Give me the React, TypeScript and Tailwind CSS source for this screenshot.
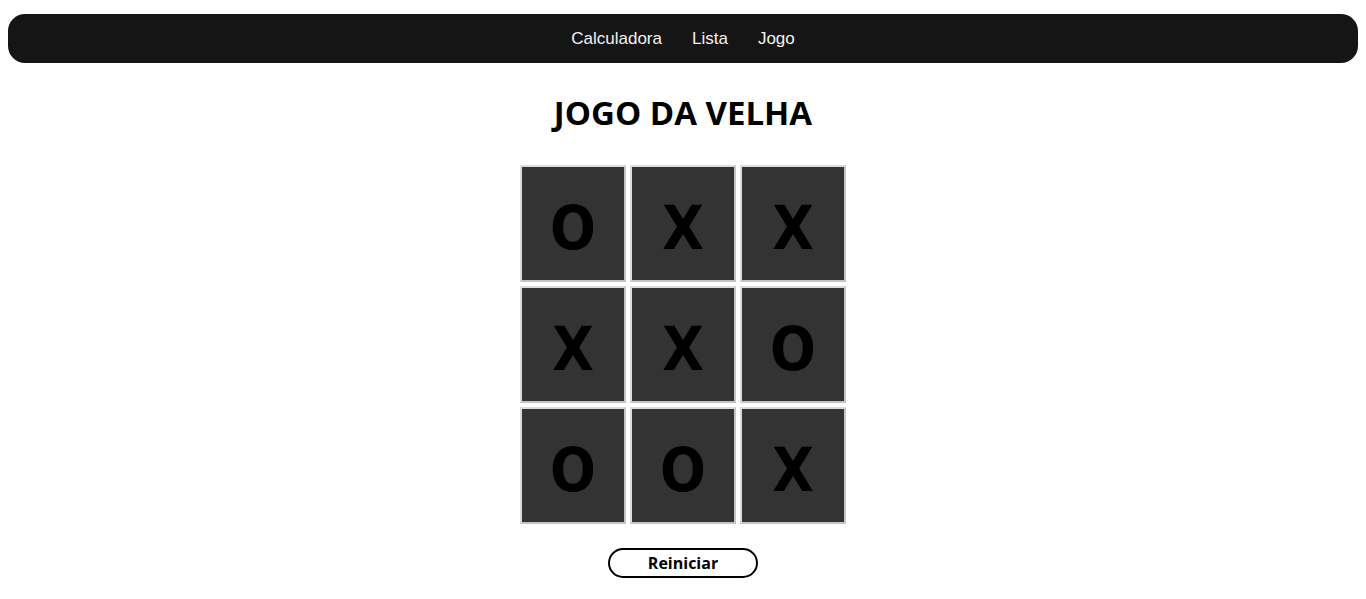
const board = ["O", "X", "X", "X", "X", "O", "O", "O", "X"];

export default function App() {
  return (
    <div className="min-h-screen bg-white pt-[14px]">
      {/* Top navigation */}
      <nav className="mx-2 flex h-[49px] items-center justify-center gap-[30px] rounded-[17px] bg-[#151515] font-['Liberation_Sans',Arial,sans-serif] text-[17px] text-[#f2f2f2]">
        <a href="#">Calculadora</a>
        <a href="#">Lista</a>
        <a href="#">Jogo</a>
      </nav>

      <main className="flex flex-col items-center font-['Open_Sans',sans-serif]">
        <h1 className="mt-[30px] text-[33px] font-bold leading-[40px] text-black">
          JOGO DA VELHA
        </h1>

        <div className="mt-[32px] grid grid-cols-[repeat(3,106px)] grid-rows-[repeat(3,117px)] gap-[4px]">
          {board.map((v, i) => (
            <button
              key={i}
              className="flex items-center justify-center border-2 border-t-[#dcdcdc] border-l-[#dcdcdc] border-r-[#c4c4c4] border-b-[#c4c4c4] bg-[#333333] pt-[8px] font-['DejaVu_Sans_Condensed','DejaVu_Sans',sans-serif] text-[60px] font-bold leading-none text-black"
            >
              {v}
            </button>
          ))}
        </div>

        <button className="mt-[24px] h-[30px] w-[150px] rounded-full border-2 border-black bg-white text-[16px] font-bold leading-none text-black">
          Reiniciar
        </button>
      </main>
    </div>
  );
}
